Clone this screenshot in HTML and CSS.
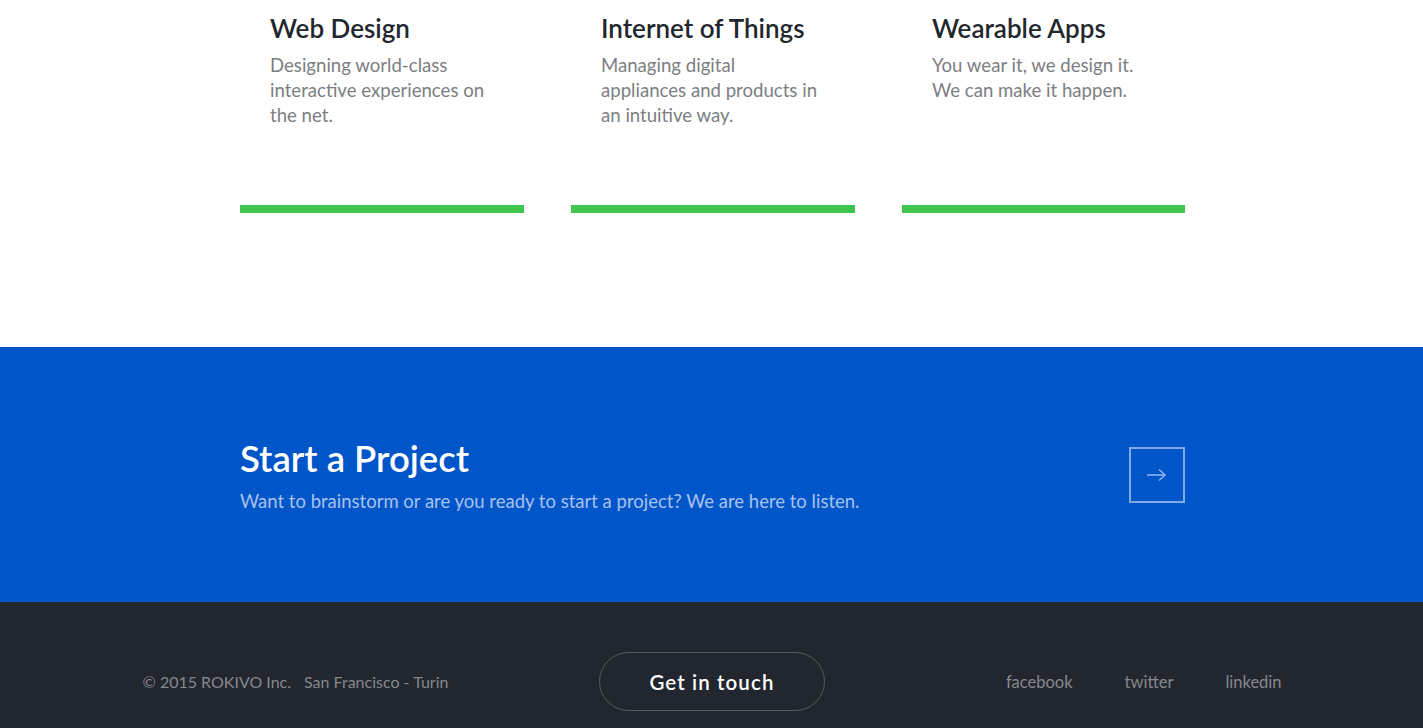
FILE: index.html
```html
<!DOCTYPE html>
<html lang="en">
<head>
<meta charset="utf-8">
<title>ROKIVO</title>
<link rel="stylesheet" href="styles.css">
</head>
<body>
<section class="services">
  <div class="services-grid">
    <div class="service">
      <div class="service-body">
        <h3 class="service-title">Web Design</h3>
        <p class="service-text">Designing world-class<br>interactive experiences on<br>the net.</p>
      </div>
      <div class="service-bar"></div>
    </div>
    <div class="service">
      <div class="service-body">
        <h3 class="service-title">Internet of Things</h3>
        <p class="service-text">Managing digital<br>appliances and products in<br>an intuitive way.</p>
      </div>
      <div class="service-bar"></div>
    </div>
    <div class="service">
      <div class="service-body">
        <h3 class="service-title">Wearable Apps</h3>
        <p class="service-text">You wear it, we design it.<br>We can make it happen.</p>
      </div>
      <div class="service-bar"></div>
    </div>
  </div>
</section>
<section class="cta">
  <div class="cta-inner">
    <div class="cta-copy">
      <h2 class="cta-title">Start a Project</h2>
      <p class="cta-text">Want to brainstorm or are you ready to start a project? We are here to listen.</p>
    </div>
    <a class="cta-arrow" href="#" aria-label="Start a project">
      <svg width="20" height="14" viewBox="0 0 20 14" fill="none" stroke="currentColor" stroke-width="1.6">
        <path d="M0 7H18"/>
        <path d="M12 1.5L18 7L12 12.5"/>
      </svg>
    </a>
  </div>
</section>
<footer class="footer">
  <div class="footer-inner">
    <div class="footer-left">
      <span>© 2015 ROKIVO Inc.</span>
      <span>San Francisco - Turin</span>
    </div>
    <a class="contact-btn" href="#">Get in touch</a>
    <nav class="social">
      <a href="#">facebook</a>
      <a href="#">twitter</a>
      <a href="#">linkedin</a>
    </nav>
  </div>
</footer>
</body>
</html>
```
FILE: styles.css
```css
* { box-sizing: border-box; }
html, body { margin: 0; padding: 0; }
body {
  font-family: Lato, "Noto Sans", sans-serif;
  background: #ffffff;
  color: #22272e;
}
a { text-decoration: none; color: inherit; }

.services {
  padding: 11px 0 134px;
}
.services-grid {
  width: 947px;
  padding-left: 2px;
  margin: 0 auto;
  display: grid;
  grid-template-columns: 284px 284px 283px;
  column-gap: 47px;
}
.service {
  display: flex;
  flex-direction: column;
}
.service-body {
  padding: 0 30px;
  height: 194px;
}
.service-title {
  margin: 0;
  font-size: 26px;
  line-height: 34px;
  font-weight: 600;
  color: #22272e;
}
.service-text {
  margin: 8px 0 0;
  font-size: 18.6px;
  line-height: 25px;
  color: #7c7e82;
  white-space: nowrap;
}
.service-bar {
  height: 8px;
  background: #3fc64f;
}

.cta {
  background: #0055c8;
  height: 255px;
  display: flex;
  align-items: center;
}
.cta-inner {
  width: 947px;
  padding-left: 2px;
  margin: 0 auto;
  display: flex;
  align-items: center;
  justify-content: space-between;
}
.cta-title {
  margin: 0;
  font-size: 36.5px;
  line-height: 42px;
  font-weight: 600;
  color: #ffffff;
}
.cta-text {
  margin: 10px 0 0;
  font-size: 18.5px;
  line-height: 24px;
  color: #a8c2ee;
}
.cta-arrow {
  width: 56px;
  height: 56px;
  border: 2px solid rgba(255, 255, 255, 0.5);
  display: flex;
  align-items: center;
  justify-content: center;
  color: #8fb3ef;
}

.footer {
  background: #22272f;
  height: 126px;
  padding-top: 50px;
}
.footer-inner {
  width: 1140px;
  padding-left: 1px;
  margin: 0 auto;
  display: grid;
  grid-template-columns: 1fr auto 1fr;
  align-items: center;
}
.footer-left {
  display: flex;
  gap: 13px;
  font-size: 16px;
  color: #85888d;
}
.contact-btn {
  width: 226px;
  height: 59px;
  border: 1px solid #565b62;
  border-radius: 30px;
  display: flex;
  align-items: center;
  justify-content: center;
  color: #ffffff;
  font-size: 20.5px;
  font-weight: 600;
  letter-spacing: 1.1px;
}
.social {
  display: flex;
  justify-content: flex-end;
  gap: 52px;
  font-size: 16.5px;
  color: #85888d;
}
```
